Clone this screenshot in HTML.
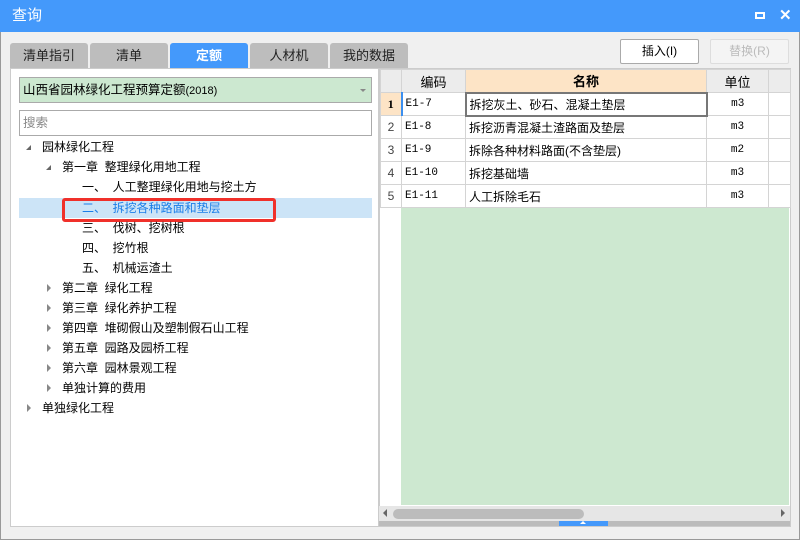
<!DOCTYPE html><html><head><meta charset="utf-8"><style>
*{margin:0;padding:0;box-sizing:border-box}
body{width:800px;height:540px;background:#f0f0f0;position:relative;overflow:hidden;font-family:"Liberation Sans","Noto Sans CJK SC",sans-serif;font-size:12px;color:#000}
.a{position:absolute}
.title{left:0;top:0;width:800px;height:32px;background:#4499fb;color:#fff;font-size:15px;line-height:32px;padding-left:12px}
.tab{top:43px;height:25px;background:#bdbdbd;text-align:center;line-height:25px;font-size:13px;color:#222;border-radius:3px 3px 0 0}
.tree div{position:absolute;height:20px;line-height:20px;font-size:12px;white-space:pre}
.tri{position:absolute;width:0;height:0}
.dn{border-left:7px solid transparent;border-bottom:7px solid #666}
.rt{border-top:4px solid transparent;border-bottom:4px solid transparent;border-left:4px solid #888}
table{border-collapse:collapse;position:absolute;left:380px;top:69px;font-size:12px}
td{border:1px solid #d4d4d4;height:23px;padding:0 3px;white-space:nowrap}
</style></head><body>
<div class="a title">查询</div>
<div class="a" style="left:755px;top:12px;width:10px;height:7px;border:2px solid #fff"></div>
<div class="a" style="left:779px;top:6px;color:#fff;font-size:15px;font-weight:bold">✕</div>
<div class="a" style="left:0;top:32px;width:1px;height:508px;background:#999"></div>
<div class="a" style="left:799px;top:32px;width:1px;height:508px;background:#999"></div>
<div class="a" style="left:0;top:539px;width:800px;height:1px;background:#999"></div>
<div class="a tab" style="left:10px;width:78px">清单指引</div>
<div class="a tab" style="left:90px;width:78px">清单</div>
<div class="a tab" style="left:170px;width:78px;background:#4499fb;color:#fff;font-weight:bold">定额</div>
<div class="a tab" style="left:250px;width:78px">人材机</div>
<div class="a tab" style="left:330px;width:78px">我的数据</div>
<div class="a" style="left:620px;top:39px;width:79px;height:25px;background:#fff;border:1px solid #aaa;border-radius:2px;text-align:center;line-height:23px">插入(I)</div>
<div class="a" style="left:710px;top:39px;width:79px;height:25px;background:#f4f4f4;border:1px solid #ddd;border-radius:2px;text-align:center;line-height:23px;color:#bbb">替换(R)</div>
<div class="a" style="left:10px;top:68px;width:369px;height:459px;background:#fff;border:1px solid #ccc"></div>
<div class="a" style="left:19px;top:77px;width:353px;height:26px;background:#cce8d0;border:1px solid #aaa;line-height:24px;padding-left:3px;font-size:12.5px">山西省园林绿化工程预算定额<span style="font-size:11px">(2018)</span></div>
<div class="a" style="left:360px;top:89px;border-left:3px solid transparent;border-right:3px solid transparent;border-top:3px solid #888"></div>
<div class="a" style="left:19px;top:110px;width:353px;height:26px;background:#fff;border:1px solid #aaa;line-height:24px;padding-left:3px;color:#888;font-size:12.5px">搜索</div>
<div class="a" style="left:19px;top:198px;width:353px;height:20px;background:#cce4f7"></div>
<div class="a" style="left:62px;top:198px;width:214px;height:24px;border:3px solid #f0302a;border-radius:3px"></div>
<div class="tree">
<div style="left:42px;top:137px">园林绿化工程</div>
<div style="left:62px;top:157px">第一章  整理绿化用地工程</div>
<div style="left:82px;top:177px">一、  人工整理绿化用地与挖土方</div>
<div style="left:82px;top:198px;color:#1b7ee8">二、  拆挖各种路面和垫层</div>
<div style="left:82px;top:218px">三、  伐树、挖树根</div>
<div style="left:82px;top:238px">四、  挖竹根</div>
<div style="left:82px;top:258px">五、  机械运渣土</div>
<div style="left:62px;top:278px">第二章  绿化工程</div>
<div style="left:62px;top:298px">第三章  绿化养护工程</div>
<div style="left:62px;top:318px">第四章  堆砌假山及塑制假石山工程</div>
<div style="left:62px;top:338px">第五章  园路及园桥工程</div>
<div style="left:62px;top:358px">第六章  园林景观工程</div>
<div style="left:62px;top:378px">单独计算的费用</div>
<div style="left:42px;top:398px">单独绿化工程</div>
</div>
<div class="a tri dn" style="left:26px;top:145px;border-left-width:5px;border-bottom-width:5px"></div>
<div class="a tri dn" style="left:46px;top:165px;border-left-width:5px;border-bottom-width:5px"></div>
<div class="a tri rt" style="left:47px;top:284px"></div>
<div class="a tri rt" style="left:47px;top:304px"></div>
<div class="a tri rt" style="left:47px;top:324px"></div>
<div class="a tri rt" style="left:47px;top:344px"></div>
<div class="a tri rt" style="left:47px;top:364px"></div>
<div class="a tri rt" style="left:47px;top:384px"></div>
<div class="a tri rt" style="left:27px;top:404px"></div>
<div class="a" style="left:379px;top:68px;width:412px;height:459px;background:#fff;border:1px solid #ccc"></div>
<div class="a" style="left:401px;top:208px;width:388px;height:297px;background:#cde8d0"></div>
<table>
<tr style="background:#ececec;text-align:center;font-size:13px"><td style="width:21px"></td><td style="width:64px">编码</td><td style="width:241px;background:#fde4c6;font-weight:bold">名称</td><td style="width:62px">单位</td><td style="width:22px"></td></tr>
<tr><td style="background:#fde4c6;text-align:center;font-weight:bold;font-family:'Liberation Serif',serif;border-right:2px solid #3b8ff0">1</td><td style="font-family:'Liberation Mono',monospace;font-size:11px">E1-7</td><td style="border:2px solid #777">拆挖灰土、砂石、混凝土垫层</td><td style="text-align:center;font-family:'Liberation Mono',monospace;font-size:11px">m3</td><td></td></tr>
<tr><td style="text-align:center;color:#444">2</td><td style="font-family:'Liberation Mono',monospace;font-size:11px">E1-8</td><td>拆挖沥青混凝土渣路面及垫层</td><td style="text-align:center;font-family:'Liberation Mono',monospace;font-size:11px">m3</td><td></td></tr>
<tr><td style="text-align:center;color:#444">3</td><td style="font-family:'Liberation Mono',monospace;font-size:11px">E1-9</td><td>拆除各种材料路面(不含垫层)</td><td style="text-align:center;font-family:'Liberation Mono',monospace;font-size:11px">m2</td><td></td></tr>
<tr><td style="text-align:center;color:#444">4</td><td style="font-family:'Liberation Mono',monospace;font-size:11px">E1-10</td><td>拆挖基础墙</td><td style="text-align:center;font-family:'Liberation Mono',monospace;font-size:11px">m3</td><td></td></tr>
<tr><td style="text-align:center;color:#444">5</td><td style="font-family:'Liberation Mono',monospace;font-size:11px">E1-11</td><td>人工拆除毛石</td><td style="text-align:center;font-family:'Liberation Mono',monospace;font-size:11px">m3</td><td></td></tr>
</table>
<div class="a" style="left:379px;top:506px;width:411px;height:15px;background:#e6e6e6"></div>
<div class="a" style="left:393px;top:509px;width:191px;height:10px;background:#bcbcbc;border-radius:5px"></div>
<div class="a" style="left:383px;top:509px;border-top:4px solid transparent;border-bottom:4px solid transparent;border-right:4px solid #666"></div>
<div class="a" style="left:781px;top:509px;border-top:4px solid transparent;border-bottom:4px solid transparent;border-left:4px solid #666"></div>
<div class="a" style="left:379px;top:521px;width:411px;height:5px;background:#bcbcbc"></div>
<div class="a" style="left:559px;top:521px;width:49px;height:5px;background:#4499fb"></div>
<div class="a" style="left:580px;top:521px;border-left:3px solid transparent;border-right:3px solid transparent;border-bottom:3px solid #fff"></div>
</body></html>
